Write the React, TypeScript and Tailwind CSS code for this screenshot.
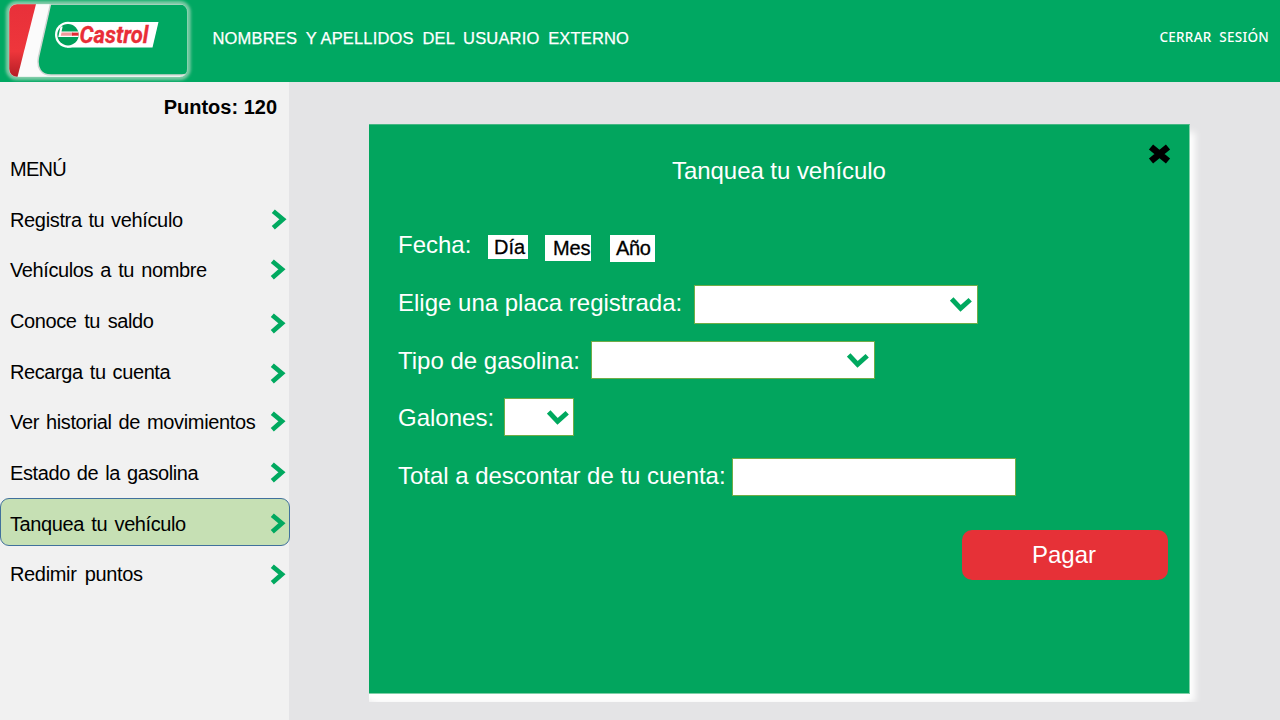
import React from "react";

type Item = { label: string; row: string; text: string; chevron: string; active?: boolean };

const items: Item[] = [
  { label: "Registra tu vehículo", row: "", text: "pl-[10px] tracking-[-0.35px] [word-spacing:1.5px]", chevron: "mt-[15px] mr-[3px]" },
  { label: "Vehículos a tu nombre", row: "mt-[2px]", text: "pl-[10px] tracking-[-0.4px] [word-spacing:2px]", chevron: "mt-[15px] mr-[4px]" },
  { label: "Conoce tu saldo", row: "mt-[3px]", text: "pl-[10px] tracking-[-0.4px] [word-spacing:2.5px]", chevron: "mt-[18px] mr-[4px]" },
  { label: "Recarga tu cuenta", row: "mt-[3px]", text: "pl-[10px] tracking-[-0.4px] [word-spacing:1.8px]", chevron: "mt-[17px] mr-[4px]" },
  { label: "Ver historial de movimientos", row: "mt-[2px]", text: "pl-[10px] tracking-[-0.35px] [word-spacing:1.7px]", chevron: "mt-[15px] mr-[4px]" },
  { label: "Estado de la gasolina", row: "mt-[3px]", text: "pl-[10px] tracking-[-0.4px] [word-spacing:1.8px]", chevron: "mt-[15px] mr-[4px]" },
  { label: "Tanquea tu vehículo", row: "mt-[3px]", text: "pl-[9px] tracking-[-0.4px] [word-spacing:2.2px]", chevron: "mt-[14px] mr-[3px]", active: true },
  { label: "Redimir puntos", row: "mt-[2px]", text: "pl-[10px] tracking-[-0.35px] [word-spacing:3px]", chevron: "mt-[16px] mr-[4px]" },
];

function ChevronRight({ className }: { className: string }) {
  return (
    <svg className={"h-[21px] w-[16px] shrink-0 " + className} viewBox="0 0 16 21" fill="none">
      <path d="M2.300 2.200 L11.900 10.300 L2.300 18.700" stroke="#00a95f" strokeWidth="4.700" />
    </svg>
  );
}

function ChevronDown({ className }: { className: string }) {
  return (
    <svg className={"h-[16px] w-[22px] shrink-0 " + className} viewBox="0 0 22 16" fill="none">
      <path d="M1.700 1.900 L10.600 11.400 L20.200 2.800" stroke="#00a95f" strokeWidth="4.900" />
    </svg>
  );
}

function Logo() {
  return (
    <svg className="h-[82px] w-[200px]" viewBox="0 0 200 82">
      <defs>
        <clipPath id="card"><rect x="9" y="4" width="178.500" height="73" rx="8" /></clipPath>
        <filter id="glow" x="-10%" y="-20%" width="120%" height="140%"><feGaussianBlur stdDeviation="1.6" /></filter>
        <linearGradient id="red" x1="0" y1="0" x2="0" y2="1">
          <stop offset="0" stopColor="#e8303a" /><stop offset="0.65" stopColor="#ee363b" /><stop offset="1" stopColor="#b51d25" />
        </linearGradient>
      </defs>
      <rect x="8" y="3" width="180.500" height="75" rx="9" fill="none" stroke="#86cdaa" strokeWidth="4" filter="url(#glow)" />
      <g clipPath="url(#card)">
        <rect x="9" y="4" width="179" height="73" fill="#fbfbfb" />
        <path d="M9 4 H36 L17.500 77 H9 Z" fill="url(#red)" />
        <path d="M50.500 4 H190 V70 Q189 75 182 75 H51 C41 75 36.500 68 38.500 57 Z" fill="#00a862" stroke="#cfd6d2" strokeWidth="1.500" />
      </g>
      <rect x="9" y="4" width="178.500" height="73" rx="8" fill="none" stroke="#b8dec9" strokeWidth="0.500" />
      <path d="M67 22 H158.500 L152.500 47.500 H67 Z" fill="#fff" />
      <circle cx="68" cy="34.700" r="13" fill="#fff" />
      <circle cx="68" cy="34.700" r="10.700" fill="#00a05a" />
      <path d="M60.500 26.500 L58.300 37 H78.500 V31.500 H61.500 L62.700 26.500 Z" fill="#fff" />
      <path d="M61.500 32.600 H73 V35.700 H60.800 Z" fill="#ef9a9b" />
      <path d="M72 32.600 H78.500 V35.700 H72 Z" fill="#e52a33" />
      <text x="79.500" y="43.300" textLength="69" lengthAdjust="spacingAndGlyphs" fill="#e92e37" stroke="#e92e37" strokeWidth="0.300" className="[font-family:Roboto,'Liberation_Sans',sans-serif] text-[24.500px] font-bold italic">Castrol</text>
    </svg>
  );
}

export default function App() {
  return (
    <div className="flex h-[720px] w-[1280px] flex-col overflow-hidden bg-[#e4e4e6] [font-family:'Liberation_Sans',Arial,sans-serif] text-black">
      <header className="flex h-[82px] shrink-0 items-start bg-[#00a862] text-white">
        <Logo />
        <div className="ml-[12px] mt-[28px] whitespace-nowrap pl-[0.5px] text-[16.500px] leading-[21px] tracking-[0.16px] [word-spacing:4px] [-webkit-text-stroke:0.25px_#fff]">
          NOMBRES <span className="[word-spacing:0px]">Y APELLIDOS</span> DEL USUARIO EXTERNO
        </div>
        <div className="ml-auto mr-[11px] mt-[27px] whitespace-nowrap [font-family:'Noto_Sans',sans-serif] text-[13.500px] font-medium leading-[20px] tracking-[0.25px] [word-spacing:4px]">CERRAR SESIÓN</div>
      </header>
      <div className="flex min-h-0 flex-1">
        <aside className="w-[289px] shrink-0 bg-[#f1f1f1]">
          <div className="pr-[12px] pt-[13px] text-right text-[20px] font-bold leading-[24px]">Puntos: 120</div>
          <div className="mt-[38px] pl-[10px] text-[20px] leading-[24px] tracking-[-0.7px]">MENÚ</div>
          <nav className="mt-[13px] flex flex-col">
            {items.map((it) => (
              <div
                key={it.label}
                className={
                  "flex h-[48px] w-[290px] items-start justify-between " + it.row +
                  (it.active ? " rounded-[9px] border border-[#41719c] bg-[#c6e0b4]" : "")
                }
              >
                <span className={"whitespace-nowrap text-[20px] leading-[24px] " + (it.active ? "mt-[13px] " : "mt-[14px] ") + it.text}>{it.label}</span>
                <ChevronRight className={it.chevron} />
              </div>
            ))}
          </nav>
        </aside>
        <main className="flex-1 pl-[80px] pt-[42px]">
          <section className="h-[570px] w-[821px] border-t border-r border-b border-t-[#45b784] border-r-[#7fd0a8] border-b-[#7fd0a8] bg-[#02a55e] text-[24px] leading-[28px] text-white shadow-[5px_8px_7px_#fff,-4px_8px_6px_#fff] [clip-path:inset(0_-20px_-8px_0)]">
            <div className="flex h-[110px] items-start pt-[19px]">
              <h1 className="ml-[303px] mt-[13px] w-[476px] whitespace-nowrap tracking-[-0.05px]">Tanquea tu vehículo</h1>
              <svg className="h-[20px] w-[23px]" viewBox="0 0 23 20">
                <path d="M3 3 L20 17 M20 3 L3 17" stroke="#000" strokeWidth="6.600" />
              </svg>
            </div>
            <div className="flex h-[50px] items-start pl-[29px]">
              <div className="mt-[-4px] w-[90px] whitespace-nowrap">Fecha:</div>
              <div className="flex text-[20px] leading-[24px] text-black [-webkit-text-stroke:0.3px_#000]">
                <div className="h-[24px] w-[40px] overflow-hidden bg-white pl-[6px]">Día</div>
                <div className="ml-[17px] h-[26px] w-[46px] overflow-hidden bg-white pl-[8px] pt-[1px] tracking-[-0.1px]">Mes</div>
                <div className="ml-[19px] h-[27px] w-[45px] overflow-hidden bg-white pl-[6px] pt-[1px] tracking-[-0.3px]">Año</div>
              </div>
            </div>
            <div className="flex h-[56px] items-start pl-[29px]">
              <div className="mt-[4px] w-[296px] whitespace-nowrap">Elige una placa registrada:</div>
              <div className="flex h-[39px] w-[284px] justify-end border border-[#70ad47] bg-white">
                <ChevronDown className="mr-[5px] mt-[11px]" />
              </div>
            </div>
            <div className="flex h-[57px] items-start pl-[29px]">
              <div className="mt-[6px] w-[193px] whitespace-nowrap">Tipo de gasolina:</div>
              <div className="flex h-[38px] w-[284px] justify-end border border-[#70ad47] bg-white">
                <ChevronDown className="mr-[5px] mt-[11px]" />
              </div>
            </div>
            <div className="flex h-[60px] items-start pl-[29px]">
              <div className="mt-[6px] w-[106px] whitespace-nowrap">Galones:</div>
              <div className="flex h-[38px] w-[70px] justify-end border border-[#70ad47] bg-white">
                <ChevronDown className="mr-[4px] mt-[11px]" />
              </div>
            </div>
            <div className="flex h-[72px] items-start pl-[29px]">
              <div className="mt-[4px] w-[334px] whitespace-nowrap tracking-[-0.02px]">Total a descontar de tu cuenta:</div>
              <div className="h-[38px] w-[284px] border border-[#70ad47] bg-white" />
            </div>
            <button className="ml-[593px] flex h-[50px] w-[206px] items-center justify-center rounded-[10px] bg-[#e63137] pr-[2px]">Pagar</button>
          </section>
        </main>
      </div>
    </div>
  );
}
